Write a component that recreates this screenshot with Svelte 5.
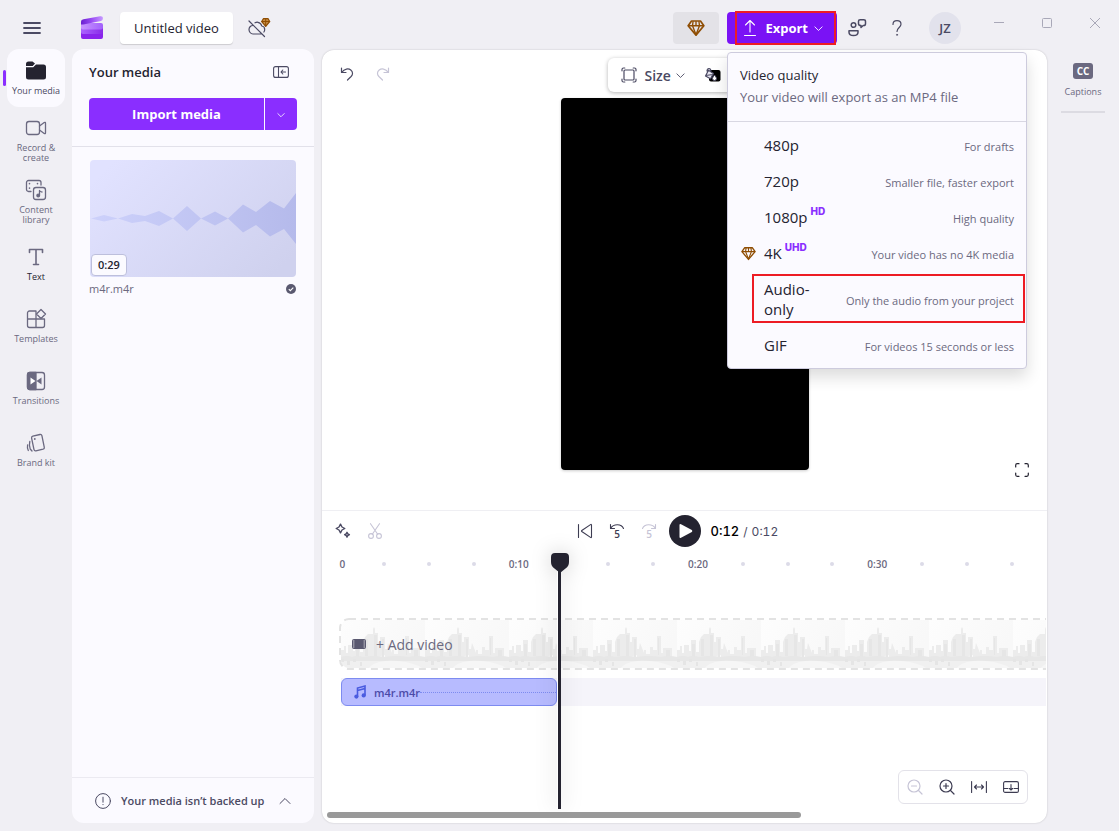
<script>
  let title = $state('Untitled video');

  const railItems = [
    { id: 'media', label: 'Your media', active: true },
    { id: 'record', label: 'Record & create' },
    { id: 'library', label: 'Content library' },
    { id: 'text', label: 'Text', dark: true },
    { id: 'templates', label: 'Templates' },
    { id: 'transitions', label: 'Transitions' },
    { id: 'brand', label: 'Brand kit' }
  ];

  const qualities = [
    { name: '480p', note: 'For drafts' },
    { name: '720p', note: 'Smaller file, faster export' },
    { name: '1080p', badge: 'HD', note: 'High quality' },
    { name: '4K', badge: 'UHD', premium: true, note: 'Your video has no 4K media' },
    { name: 'Audio-only', note: 'Only the audio from your project', marked: true },
    { name: 'GIF', note: 'For videos 15 seconds or less' }
  ];

  // one tick every 2.5 seconds, a label every 10
  const ticks = Array.from({ length: 16 }, (_, i) => {
    const s = i * 2.5;
    if (i % 4) return '';
    return s === 0 ? '0' : `${Math.floor(s / 60)}:${String(s % 60).padStart(2, '0')}`;
  });
</script>

{#snippet gem(size)}
  <svg width={size} height={size} viewBox="0 0 16 16" fill="none" stroke="#8f4e04" stroke-width="1.5" stroke-linejoin="round" aria-hidden="true">
    <path d="M4 1.8h8L15 6l-7 8.3L1 6z" />
    <path d="M1 6h14M5.4 2L4.9 6 8 14l3.1-8-.5-4M8 2v4" stroke-width="1.2" />
  </svg>
{/snippet}

{#snippet chevron(size)}
  <svg width={size} height={size} viewBox="0 0 10 10" fill="none" stroke="currentColor" stroke-linecap="round" stroke-linejoin="round" aria-hidden="true">
    <path d="M1 3.2l4 4 4-4" />
  </svg>
{/snippet}

<div class="app">
  <header class="topbar">
    <button class="icon-btn menu-btn" aria-label="Menu">
      <svg width="18" height="14" viewBox="0 0 18 14" stroke="#4b4a63" stroke-width="1.8" stroke-linecap="round"><path d="M1 2h16M1 7h16M1 12h16" /></svg>
    </button>
    <svg class="logo" width="24" height="24" viewBox="0 0 24 24" aria-hidden="true">
      <defs>
        <linearGradient id="lg-top" x1="0" x2="1"><stop offset="0" stop-color="#6a1fd0" /><stop offset=".5" stop-color="#9b4df5" /><stop offset="1" stop-color="#c79bff" /></linearGradient>
        <linearGradient id="lg-mid" x1="0" x2="1"><stop offset="0" stop-color="#c995ff" /><stop offset="1" stop-color="#a261fb" /></linearGradient>
        <linearGradient id="lg-low" x1="0" x2="1"><stop offset="0" stop-color="#ab62ff" /><stop offset="1" stop-color="#8a2be8" /></linearGradient>
      </defs>
      <path d="M1 15h22v6a2 2 0 0 1-2 2H3a2 2 0 0 1-2-2z" fill="#8a24ec" />
      <path d="M1 12h22v4a2 2 0 0 1-2 2H3a2 2 0 0 1-2-2z" fill="url(#lg-low)" />
      <path d="M1 7h20a2 2 0 0 1 2 2v2.500a2 2 0 0 1-2 2H3a2 2 0 0 1-2-2z" fill="url(#lg-mid)" />
      <path d="M1 8.500V5.500q0-1.800 2.500-2.300L20 .3q3-.4 3 1.700 0 2.500-2 3L6 8Q2 8.700 1 8.500z" fill="url(#lg-top)" />
    </svg>
    <input class="title" aria-label="Video title" bind:value={title} />
    <button class="icon-btn cloud-btn" aria-label="Backup is off">
      <svg width="24" height="22" viewBox="0 0 24 22" fill="none" stroke="#4b4a63" stroke-width="1.2" stroke-linecap="round" stroke-linejoin="round">
        <path d="M6 8.500C3.500 8.500 2 10.500 2 12.500S3.500 17 6 17h9M8 5.800c1-.5 2-.7 3-.5 2 .4 3.300 1.700 3.700 3.700 2 .2 3 1.500 3 3.500 0 1-.3 1.800-.8 2.500M2 4l15.500 15.500" />
        <path d="M16.500 1.600h4.500l1.700 2.900-4 4.800-4-4.800z" fill="#c98f45" stroke="#8f4e04" />
        <path d="M14.700 4.500h8M18.700 2v7" stroke="#8f4e04" stroke-width="1" />
      </svg>
    </button>

    <div class="actions">
      <button class="gem-btn" aria-label="Upgrade">{@render gem(18)}</button>
      <div class="export">
        <button class="export-btn" aria-expanded="true">
          <svg width="14" height="18" viewBox="0 0 14 18" fill="none" stroke="#fff" stroke-width="1.1" stroke-linecap="round" stroke-linejoin="round"><path d="M7 13V1.500M2.500 6L7 1.500 11.500 6M1.500 16.500h11" /></svg>
          <span>Export</span>
          {@render chevron(9)}
        </button>
        <span class="export-mark"></span>

        <div class="export-menu" role="menu">
          <div class="menu-head">
            <div class="menu-title">Video quality</div>
            <div class="menu-sub">Your video will export as an MP4 file</div>
          </div>
          <div class="menu-list">
            {#each qualities as q}
              <button class="quality" class:marked={q.marked} role="menuitem">
                <span class="quality-icon">{#if q.premium}{@render gem(15)}{/if}</span>
                <span class="quality-name">{q.name}{#if q.badge}<sup>{q.badge}</sup>{/if}</span>
                <span class="quality-note">{q.note}</span>
              </button>
            {/each}
          </div>
        </div>
      </div>
      <button class="icon-btn" aria-label="Feedback">
        <svg width="20" height="20" viewBox="0 0 20 20" fill="none" stroke="#4b4a63" stroke-width="1.5" stroke-linejoin="round">
          <circle cx="6.500" cy="7" r="2.300" />
          <path d="M2 12.700h9v1.500c0 2-1.800 3.300-4.500 3.300S2 16.200 2 14.200zM11.500 3.300c0-1 .8-1.600 1.600-1.600h3.600c1 0 1.800.8 1.800 1.700v2.300c0 1-.8 1.800-1.800 1.800h-.5L14 9.500v-2c-1.500 0-2.500-.8-2.500-1.800z" />
        </svg>
      </button>
      <button class="icon-btn" aria-label="Help">
        <svg width="12" height="18" viewBox="0 0 12 18" fill="none" stroke="#4b4a63" stroke-width="1.200" stroke-linecap="round"><path d="M2 5.500C2 3 3.700 1.700 6 1.700S10 3 10 5.300C10 8.500 6 8.500 6 12.500" /><circle cx="6" cy="15.800" r=".6" fill="#4b4a63" stroke-width=".6" /></svg>
      </button>
      <button class="avatar">JZ</button>
      <div class="window-btns">
        <button class="icon-btn" aria-label="Minimize"><svg width="10" height="10" viewBox="0 0 10 10" stroke="#a9a8b8"><path d="M0 4.500h10" /></svg></button>
        <button class="icon-btn" aria-label="Maximize"><svg width="10" height="10" viewBox="0 0 10 10" fill="none" stroke="#a9a8b8"><rect x=".5" y=".5" width="9" height="9" rx="1" /></svg></button>
        <button class="icon-btn" aria-label="Close"><svg width="10" height="10" viewBox="0 0 10 10" stroke="#a9a8b8"><path d="M0 0l10 10M10 0L0 10" /></svg></button>
      </div>
    </div>
  </header>

  <div class="workspace">
    <nav class="rail">
      {#each railItems as item}
        <button class="rail-item" class:active={item.active} class:dark={item.dark}>
          <svg width="24" height="24" viewBox="0 0 24 24" fill="none" stroke="#6b6980" stroke-width="1.300" stroke-linecap="round" stroke-linejoin="round" aria-hidden="true">
            {#if item.id === 'media'}
              <g fill="#242330" stroke="none">
                <path d="M2 5a2.500 2.500 0 0 1 2.500-2.500h4L11 4.600 8.700 7H2z" />
                <path d="M2 8.300h7.200L12 5.500h7.500A2.500 2.500 0 0 1 22 8v10a2.500 2.500 0 0 1-2.500 2.500h-15A2.500 2.500 0 0 1 2 18z" />
              </g>
            {:else if item.id === 'record'}
              <rect x="2.500" y="5.500" width="13" height="13" rx="2.500" />
              <path d="M15.500 10l4.700-3.500q1.300-.7 1.300.8v9.400q0 1.500-1.300.8L15.500 14" />
            {:else if item.id === 'library'}
              <path d="M7 13.500H4.500a2 2 0 0 1-2-2v-7a2 2 0 0 1 2-2H15a2 2 0 0 1 2 2V7" />
              <path d="M5.500 5.500v.2M5.500 10v.2M13.500 5.500v.2" stroke-width="1.600" />
              <rect x="9.500" y="9.500" width="12" height="12" rx="2.500" />
              <path d="M15.500 17.500v-5q1 1.500 2.500 1.500" />
              <circle cx="14.200" cy="17.500" r="1.300" fill="#6b6980" />
            {:else if item.id === 'text'}
              <path d="M5.500 7.500V4.500h13v3M12 4.500v15M9.500 19.500h5" stroke-width="1.600" />
            {:else if item.id === 'templates'}
              <path d="M12 12V4H5.500A2 2 0 0 0 3.500 6v12.500a2 2 0 0 0 2 2h13a2 2 0 0 0 2-2V12h-17M12 12v8.500" />
              <path d="M17 2.500l4.500 4.500-4.500 4.500L12.500 7z" fill="#f0eff4" />
            {:else if item.id === 'transitions'}
              <rect x="3.500" y="3.500" width="17" height="17" rx="2.500" />
              <path d="M3.500 6a2.500 2.500 0 0 1 2.500-2.500h6v17H6A2.500 2.500 0 0 1 3.500 18z" fill="#6b6980" />
              <path d="M6.500 8.500v7L11.500 12z" fill="#fff" stroke="none" />
              <path d="M17.500 8.500v7L12.500 12z" fill="#6b6980" stroke="none" />
            {:else}
              <path d="M8.800 5.200l7.200-1.700q1.500-.3 1.900 1.200l2.400 11.600q.3 1.500-1.200 1.900l-7.200 1.600q-1.500.3-1.900-1.200L7.600 7.100q-.3-1.500 1.200-1.900z" />
              <path d="M5.800 10.500q-1 4 .4 7.500l1.800 2M3.600 14q-.6 3 .7 5.500" />
              <path d="M10.800 8v.1" stroke-width="1.800" />
            {/if}
          </svg>
          <span>{item.label}</span>
        </button>
      {/each}
    </nav>

    <aside class="media">
      <div class="media-head">
        <h2>Your media</h2>
        <button class="collapse" aria-label="Collapse panel">
          <svg width="16" height="12" viewBox="0 0 16 12" fill="none" stroke="#4b4a63" stroke-width="1.100" stroke-linecap="round" stroke-linejoin="round"><rect x=".6" y=".6" width="14.800" height="10.800" rx="2" /><path d="M5.500.6v10.800M12.500 6H8M9.800 4L8 6l1.800 2" /></svg>
        </button>
      </div>
      <div class="import">
        <button class="import-main">Import media</button>
        <button class="import-more" aria-label="More import options">{@render chevron(8)}</button>
      </div>
      <div class="media-grid">
        <div class="thumb">
          <svg viewBox="0 0 206 117" preserveAspectRatio="none" aria-hidden="true">
            <defs>
              <linearGradient id="thumb-bg" x1="0" y1=".2" x2="1" y2=".8"><stop offset="0" stop-color="#e1e2ff" /><stop offset="1" stop-color="#cfd1ee" /></linearGradient>
              <linearGradient id="thumb-wave" x1="0" x2="1"><stop offset="0" stop-color="#cdd1fb" /><stop offset="1" stop-color="#b5baeb" /></linearGradient>
            </defs>
            <rect width="206" height="117" fill="url(#thumb-bg)" />
            <polygon fill="url(#thumb-wave)" points="1,58.500 14,55 28,58.500 42,54 55,56 69,51 83,58.500 97,46 111,58.500 125,51.500 138,58.500 153,44.500 166,52 180,41 194,48.500 206,33 206,84 194,69 180,76.500 166,65 153,72.500 138,58.500 125,65.500 111,58.500 97,71 83,58.500 69,66 55,61 42,63 28,58.500 14,61.500" />
          </svg>
          <span class="duration">0:29</span>
        </div>
        <div class="file">
          <span>m4r.m4r</span>
          <svg width="10" height="10" viewBox="0 0 10 10" aria-label="In use"><circle cx="5" cy="5" r="5" fill="#5a5970" /><path d="M2.800 5.200l1.500 1.500 3-3" fill="none" stroke="#fff" stroke-width="1.100" /></svg>
        </div>
      </div>
      <button class="backup">
        <svg width="16" height="16" viewBox="0 0 16 16" fill="none" stroke="#4b4a63" stroke-linecap="round"><circle cx="8" cy="8" r="7.400" /><path d="M8 4.200v5M8 11.500v.2" /></svg>
        <span>Your media isn’t backed up</span>
        <svg width="12" height="8" viewBox="0 0 12 8" fill="none" stroke="#4b4a63" stroke-linecap="round" stroke-linejoin="round"><path d="M1 6.500l5-5 5 5" /></svg>
      </button>
    </aside>

    <main class="editor">
      <section class="preview">
        <div class="preview-bar">
          <button class="icon-btn" aria-label="Undo">
            <svg width="14" height="16" viewBox="0 0 14 16" fill="none" stroke="#4b4a63" stroke-width="1.200" stroke-linecap="round" stroke-linejoin="round"><path d="M1.500 2v4.500H6M1.700 6.300C4.500 2.500 8.500 2.200 10.800 4s2.200 4.500.3 6.500L7.500 14" /></svg>
          </button>
          <button class="icon-btn" aria-label="Redo" disabled>
            <svg width="14" height="16" viewBox="0 0 14 16" fill="none" stroke="#c6c4d6" stroke-width="1.200" stroke-linecap="round" stroke-linejoin="round"><path d="M12.500 2v4.500H8M12.300 6.300C9.500 2.500 5.500 2.200 3.200 4s-2.200 4.500-.3 6.500L6.500 14" /></svg>
          </button>
        </div>
        <div class="size-bar">
          <button class="size-btn">
            <svg width="16" height="16" viewBox="0 0 16 16" fill="none" stroke="#4b4a63" stroke-width="1.200" stroke-linecap="round" stroke-linejoin="round"><rect x="3" y="3" width="10" height="10" rx="1" /><path d="M1 3.800V2.500Q1 1 2.500 1h1.300M12.200 1h1.300Q15 1 15 2.500v1.300M15 12.200v1.300q0 1.500-1.500 1.500h-1.300M3.800 15H2.500Q1 15 1 13.500v-1.300" /></svg>
            <span>Size</span>
            {@render chevron(9)}
          </button>
          <button class="icon-btn" aria-label="Background colour">
            <svg width="18" height="16" viewBox="0 0 18 16"><rect x="6" y="3" width="11.500" height="11.500" rx="2" /><path d="M5.500 3.200l5 3.300-3 5.300L2.500 9zM4 4.500q0-3 2-3t2 3.500M2.700 8.500l7-1" fill="#e9e8f3" stroke="#4b4a63" stroke-width="1.200" stroke-linejoin="round" /><path d="M11.500 8q2 2.300 2 3.500a2 2 0 0 1-4 0q0-1.200 2-3.500z" fill="#fff" stroke="#4b4a63" /></svg>
          </button>
        </div>
        <div class="stage"></div>
        <button class="icon-btn fullscreen" aria-label="Full screen">
          <svg width="14" height="14" viewBox="0 0 14 14" fill="none" stroke="#242330" stroke-width="1.200" stroke-linecap="round"><path d="M.7 4V2.200Q.7.700 2.200.700H4M10 .7h1.800q1.500 0 1.500 1.500V4M13.300 10v1.800q0 1.500-1.500 1.500H10M4 13.300H2.200q-1.500 0-1.500-1.500V10" /></svg>
        </button>
      </section>

      <section class="timeline">
        <div class="controls">
          <div class="controls-left">
            <button class="icon-btn" aria-label="Smart tools">
              <svg width="16" height="16" viewBox="0 0 16 16" fill="none" stroke="#4b4a63" stroke-width="1.400" stroke-linejoin="round"><path d="M5.500 1.200l1.500 2.800 2.800 1.500L7 7 5.500 9.800 4 7 1.200 5.500 4 4zM12 9.300l.8 1.600 1.600.8-1.600.8L12 14.100l-.8-1.600-1.600-.8 1.600-.8z" /></svg>
            </button>
            <button class="icon-btn" aria-label="Split" disabled>
              <svg width="14" height="16" viewBox="0 0 14 16" fill="none" stroke="#c6c4d6" stroke-width="1.100" stroke-linecap="round"><circle cx="3" cy="13" r="2.400" /><circle cx="11" cy="13" r="2.400" /><path d="M2.500.7l7.200 10.500M11.500.7L4.300 11.200" /></svg>
            </button>
            <div class="transport">
              <button class="icon-btn" aria-label="Skip to start">
                <svg width="16" height="16" viewBox="0 0 16 16" fill="none" stroke="#3d3c52" stroke-width="1.100" stroke-linecap="round" stroke-linejoin="round"><path d="M1.500 1.500v13M14.500 2v12q0 1-1 .4L4.800 8.500q-.6-.5 0-1L13.500 1.600q1-.6 1 .4z" /></svg>
              </button>
              <button class="icon-btn" aria-label="Back 5 seconds">
                <svg width="16" height="24" viewBox="0 -4 16 24" fill="none" stroke="#3d3c52" stroke-width="1.100" stroke-linecap="round" stroke-linejoin="round"><path d="M1.500 1.500V5.500H5.500M1.800 5.200C4.500.5 12.500.5 14.500 5.500" /><text class="step" x="8" y="15">5</text></svg>
              </button>
              <button class="icon-btn faded" aria-label="Forward 5 seconds" disabled>
                <svg width="16" height="24" viewBox="0 -4 16 24" fill="none" stroke="#c6c4d6" stroke-width="1.100" stroke-linecap="round" stroke-linejoin="round"><path d="M14.500 1.500V5.500H10.500M14.200 5.200C11.500.5 3.500.5 1.500 5.500" /><text class="step" x="8" y="15">5</text></svg>
              </button>
            </div>
          </div>
          <button class="play" aria-label="Play">
            <svg width="14" height="16" viewBox="0 0 14 16" fill="#fff"><path d="M.5 2Q.5.500 2 1.200l10.800 5.700q1.200 1.100 0 2.200L2 14.800Q.5 15.500.5 14z" /></svg>
          </button>
          <div class="time"><span class="now">0:12</span><span>/</span><span>0:12</span></div>
        </div>

        <div class="ruler">
          {#each ticks as label}
            <div class="tick">
              {#if label}{label}{:else}<i></i>{/if}
            </div>
          {/each}
        </div>

        <div class="tracks">
          <button class="video-track">
            <svg class="skyline" aria-hidden="true">
              <defs>
                <linearGradient id="sky" x1="0" y1="0" x2="1" y2=".3"><stop offset="0" stop-color="#fdfdfd" /><stop offset="1" stop-color="#f8f8f8" /></linearGradient>
                <pattern id="city" x="2" width="84" height="52" patternUnits="userSpaceOnUse">
                  <rect width="84" height="52" fill="url(#sky)" />
                  <g fill="#ececec">
                    <path d="M0 42V32h3v-4h2v7h2v-8h5v6h2V22h5v12h3v8z" />
                    <path d="M22 42V24l2-5 3-3h5v-5l1-2 1 2v4h3v9h2v-5h5v18z" />
                    <path d="M44 42V31h2l1-6 4 10v-3h2v4h4v-7h3v3h4V18h4v17h2v-5h9v9h5v3z" />
                  </g>
                  <path fill="#e6e6e6" d="M15 26h3v14h-3zM24 21h3v17h-3zM33 17h3v21h-3zM41 21h2v18h-2zM65 20h1v17h-1zM73 32h4v7h-4z" />
                  <path fill="#e7e7e7" d="M0 39q6-2 11 0 5-2 11 0 12-2 22 0 11-2 24 0 8-2 16 0v4H0z" />
                  <path fill="#f0f0f0" d="M0 43h84v9H0z" />
                  <path fill="#f6f6f6" d="M26 52q5-8 18-9 20-1 34 5l6 4z" />
                  <path fill="#e5e5e5" d="M0 41h3v3H0zM6 43h3v4H6zM12 41h3v3h-3zM19 44h2v4h-2z" />
                </pattern>
              </defs>
              <rect x="1" y="1" width="120%" height="50" rx="9" fill="url(#city)" stroke="#fff" stroke-width="2" />
              <rect x="1" y="1" width="120%" height="50" rx="9" fill="none" stroke="#e3e3e3" stroke-width="2" stroke-dasharray="7 5" />
            </svg>
            <svg width="14" height="10" viewBox="0 0 14 10" aria-hidden="true"><rect width="14" height="10" rx="2" fill="#5a5970" /><path d="M1.800 1.500v8M12.200 1.500v8" stroke="#fff" stroke-dasharray="1 1" /></svg>
            <span>+ Add video</span>
          </button>
          <div class="audio-track">
            <button class="clip">
              <svg width="12" height="14" viewBox="0 0 12 14" aria-hidden="true"><path d="M3.500 11.500V3L11 1v9.500M3.500 5.500L11 3.500" fill="none" stroke="#4a5ce0" stroke-width="1.600" /><circle cx="2.400" cy="11.600" r="2.100" fill="#4a5ce0" /><circle cx="9.700" cy="10.400" r="2.100" fill="#4a5ce0" /></svg>
              <span>m4r.m4r</span>
              <i></i>
            </button>
          </div>
        </div>

        <div class="playhead">
          <svg width="18" height="20" viewBox="0 0 18 20" aria-hidden="true"><path d="M4 0h10q4 0 4 4v5q0 4-3.500 6.500L9 20l-5.500-4.500Q0 13 0 9V4q0-4 4-4z" fill="#242330" /></svg>
        </div>
        <div class="scrollbar"></div>

        <div class="zoom-bar">
          <button class="icon-btn" aria-label="Zoom out" disabled><svg width="16" height="16" viewBox="0 0 16 16" fill="none" stroke="#c6c4d6" stroke-width="1.200" stroke-linecap="round"><circle cx="7" cy="7" r="6" /><path d="M4.500 7h5M11.500 11.500L15 15" /></svg></button>
          <button class="icon-btn" aria-label="Zoom in"><svg width="16" height="16" viewBox="0 0 16 16" fill="none" stroke="#3d3c52" stroke-width="1.200" stroke-linecap="round"><circle cx="7" cy="7" r="6" /><path d="M4.500 7h5M7 4.500v5M11.500 11.500L15 15" /></svg></button>
          <button class="icon-btn" aria-label="Fit to width"><svg width="16" height="14" viewBox="0 0 16 14" fill="none" stroke="#3d3c52" stroke-width="1.100" stroke-linecap="round" stroke-linejoin="round"><path d="M.6 1.500v11M15.400 1.500v11M3.500 7h9M5.500 5l-2 2 2 2M10.500 5l2 2-2 2" /></svg></button>
          <button class="icon-btn" aria-label="Collapse timeline"><svg width="16" height="12" viewBox="0 0 16 12" fill="none" stroke="#3d3c52" stroke-width="1.100" stroke-linecap="round" stroke-linejoin="round"><rect x=".6" y=".6" width="14.800" height="10.800" rx="1.500" /><path d="M.6 7.500h4.400M11 7.500h4.400M8 3.500V9M6.500 7.500L8 9l1.500-1.500" /></svg></button>
        </div>
      </section>
    </main>

    <aside class="side">
      <button class="captions">
        <span class="cc">CC</span>
        <span>Captions</span>
      </button>
    </aside>
  </div>
</div>

<style>
  :global(body) {
    margin: 0;
    background: #f0eff4;
  }

  .app {
    --ink: #242330;
    --text: #4b4a63;
    --muted: #6b6980;
    --purple: #8a2eff;
    display: flex;
    flex-direction: column;
    height: 100vh;
    min-height: 640px;
    box-sizing: border-box;
    padding-bottom: 8px;
    font-family: 'Open Sans', 'Noto Sans', sans-serif;
    font-size: 13px;
    color: var(--ink);
    overflow: hidden;
  }

  .app * {
    box-sizing: border-box;
  }

  button {
    font: inherit;
    color: inherit;
    border: none;
    padding: 0;
    margin: 0;
    background: none;
    cursor: pointer;
  }

  .icon-btn {
    display: inline-flex;
    align-items: center;
    justify-content: center;
    flex: none;
    width: 32px;
    height: 32px;
  }

  /* top bar */
  .topbar {
    display: flex;
    align-items: center;
    height: 49px;
    padding: 7px 0 0 16px;
    flex: none;
  }

  .logo {
    margin: 0 16px 0 32px;
  }

  .title {
    width: 113px;
    height: 32px;
    padding: 0;
    border: none;
    border-radius: 4px;
    background: #fff;
    box-shadow: 0 1px 1px rgba(0, 0, 0, 0.15);
    text-align: center;
    font: inherit;
    color: var(--ink);
  }

  .cloud-btn {
    margin-left: 10px;
  }

  .actions {
    display: flex;
    align-items: center;
    margin-left: auto;
  }

  .gem-btn {
    display: flex;
    align-items: center;
    justify-content: center;
    width: 46px;
    height: 32px;
    margin-right: 8px;
    border-radius: 4px;
    background: #e3e2e7;
  }

  .export {
    position: relative;
    margin-right: 2px;
  }

  .export-btn {
    display: flex;
    align-items: center;
    justify-content: flex-end;
    gap: 6px;
    width: 110px;
    height: 32px;
    padding-right: 14px;
    border-radius: 4px;
    background: #7a12f5;
    color: #fff;
    font-weight: 700;
  }

  .export-btn span {
    margin-left: 2px;
  }

  .export-mark {
    position: absolute;
    inset: -1px 1px -1px 8px;
    border: 2px solid #ed1c24;
    pointer-events: none;
  }

  .export-menu {
    position: absolute;
    top: 40px;
    left: 0;
    z-index: 10;
    width: 300px;
    border: 1px solid #cdcbdd;
    border-radius: 4px;
    background: #fbfaff;
    box-shadow: 0 8px 16px rgba(0, 0, 0, 0.14);
  }

  .menu-head {
    padding: 11px 12px 13px;
    line-height: 22px;
    border-bottom: 1px solid #d8d7e2;
  }

  .menu-sub {
    color: var(--muted);
  }

  .menu-list {
    padding: 5px 0;
  }

  .quality {
    position: relative;
    display: flex;
    align-items: center;
    width: 100%;
    padding: 8px 12px;
    text-align: left;
    line-height: 20px;
  }

  .quality-icon {
    display: flex;
    justify-content: center;
    width: 16px;
    margin-right: 8px;
  }

  .quality-name {
    flex: 1;
    font-size: 15px;
  }

  .quality-name sup {
    margin-left: 3px;
    font-family: Inter, sans-serif;
    font-size: 10px;
    font-weight: 800;
    line-height: 0;
    vertical-align: 8px;
    color: var(--purple);
  }

  .quality-note {
    padding-top: 4px;
    font-size: 11px;
    line-height: 16px;
    white-space: nowrap;
    color: var(--muted);
  }

  .marked .quality-note {
    padding-left: 12px;
  }

  .marked::after {
    content: '';
    position: absolute;
    inset: 3px 1px 4px 24px;
    border: 2px solid #ed1c24;
  }

  .avatar {
    width: 32px;
    height: 32px;
    margin: 0 14px;
    border-radius: 50%;
    background: #e2e2ec;
    color: var(--text);
    font-weight: 600;
  }

  .actions > .icon-btn {
    width: 36px;
    margin-right: 4px;
  }

  .actions > .icon-btn + .icon-btn {
    margin-right: 0;
  }

  .window-btns {
    display: flex;
    align-self: flex-start;
  }

  .window-btns .icon-btn {
    width: 48px;
    height: 22px;
  }

  .workspace {
    display: flex;
    flex: 1;
    min-height: 0;
  }

  /* left rail */
  .rail {
    display: flex;
    flex-direction: column;
    align-items: center;
    gap: 4px;
    flex: none;
    width: 72px;
  }

  .rail-item {
    position: relative;
    display: flex;
    flex-direction: column;
    align-items: center;
    justify-content: center;
    gap: 3px;
    width: 58px;
    height: 58px;
    padding-bottom: 1px;
    border-radius: 12px;
    font-size: 9px;
    line-height: 10px;
    color: var(--muted);
  }

  .rail-item.active {
    background: #fbfaff;
    color: var(--text);
  }

  .rail-item.dark {
    color: var(--ink);
  }

  .rail-item.active::before {
    content: '';
    position: absolute;
    left: -4px;
    top: 21px;
    width: 3px;
    height: 16px;
    border-radius: 2px;
    background: var(--purple);
  }

  .rail-item span {
    max-width: 52px;
  }

  /* media panel */
  .media {
    display: flex;
    flex-direction: column;
    flex: none;
    width: 242px;
    margin-right: 8px;
    border-radius: 12px;
    background: #fbfaff;
  }

  .media-head {
    display: flex;
    align-items: center;
    justify-content: space-between;
    padding: 7px 17px 10px;
  }

  .collapse {
    display: flex;
    align-items: center;
    justify-content: center;
    width: 32px;
    height: 32px;
  }

  h2 {
    margin: 0;
    font-size: 13px;
    font-weight: 600;
  }

  .import {
    display: flex;
    gap: 1px;
    padding: 0 17px 16px;
    border-bottom: 1px solid #e2e1ea;
  }

  .import-main,
  .import-more {
    height: 32px;
    background: var(--purple);
    color: #fff;
  }

  .import-main {
    flex: 1;
    border-radius: 4px 0 0 4px;
    font-weight: 700;
  }

  .import-more {
    width: 32px;
    border-radius: 0 4px 4px 0;
  }

  .media-grid {
    flex: 1;
    padding: 13px 17px;
  }

  .thumb {
    position: relative;
    height: 117px;
    margin: 0 1px;
    border-radius: 4px;
    overflow: hidden;
  }

  .thumb svg {
    display: block;
    width: 100%;
    height: 100%;
  }

  .duration {
    position: absolute;
    left: 1px;
    bottom: 1px;
    padding: 0 6px;
    border: 1px solid #bdbfdc;
    border-radius: 4px;
    background: #fbfaff;
    font-size: 11px;
    font-weight: 600;
    line-height: 20px;
  }

  .file {
    display: flex;
    align-items: center;
    justify-content: space-between;
    padding: 4px 1px 0 0;
    font-size: 11px;
    line-height: 16px;
    color: var(--muted);
  }

  .backup {
    display: flex;
    align-items: center;
    height: 46px;
    padding: 0 23px;
    border-top: 1px solid #ebeaf1;
    font-size: 11px;
    font-weight: 600;
    color: var(--text);
  }

  .backup span {
    margin: 0 auto 0 10px;
  }

  /* editor */
  .editor {
    display: flex;
    flex-direction: column;
    flex: 1;
    min-width: 0;
    margin-top: 1px;
    border-radius: 12px;
    background: #fff;
    box-shadow: 0 0 2px rgba(0, 0, 0, 0.2);
  }

  .preview {
    position: relative;
    display: flex;
    flex-direction: column;
    flex: 1;
    min-height: 0;
    padding-bottom: 40px;
  }

  .preview-bar {
    display: flex;
    align-items: center;
    gap: 4px;
    flex: none;
    height: 48px;
    padding-left: 9px;
  }

  .size-bar {
    position: absolute;
    top: 8px;
    left: 50%;
    display: flex;
    align-items: center;
    width: 154px;
    height: 34px;
    margin-left: -77px;
    padding-left: 13px;
    border-radius: 6px;
    background: #fff;
    box-shadow: 0 1px 4px rgba(0, 0, 0, 0.3);
  }

  .size-btn {
    display: flex;
    align-items: center;
    font-size: 14px;
    font-weight: 600;
    color: var(--text);
  }

  .size-btn span {
    margin: 0 5px 0 8px;
  }

  .size-bar .icon-btn {
    margin-left: 11px;
  }

  .stage {
    flex: 1;
    min-height: 0;
    align-self: center;
    aspect-ratio: 2 / 3;
    border-radius: 4px;
    background: #000;
    box-shadow: 0 1px 3px rgba(0, 0, 0, 0.2);
  }

  .fullscreen {
    position: absolute;
    right: 9px;
    bottom: 24px;
  }

  .timeline {
    position: relative;
    flex: none;
    height: 313px;
    border-top: 1px solid #efeff3;
    overflow: hidden;
  }

  .controls {
    display: grid;
    grid-template-columns: 1fr 32px 1fr;
    align-items: center;
    height: 40px;
  }

  .controls-left {
    display: flex;
    padding: 0 4px 0 5px;
  }

  .transport {
    display: flex;
    margin-left: auto;
    color: #3d3c52;
  }

  .faded {
    color: #c6c4d6;
  }

  .step {
    font-size: 10px;
    font-weight: 600;
    text-anchor: middle;
    fill: currentColor;
    stroke: none;
  }

  .play {
    display: flex;
    align-items: center;
    justify-content: center;
    width: 32px;
    height: 32px;
    padding-left: 3px;
    border-radius: 50%;
    background: var(--ink);
  }

  .time {
    display: flex;
    align-items: center;
    gap: 4px;
    padding-left: 10px;
    font-family: Inter, sans-serif;
    font-size: 12px;
    font-variant-numeric: tabular-nums;
    color: var(--text);
  }

  .now {
    font-size: 13px;
    font-weight: 500;
    color: #000;
  }

  .ruler {
    display: flex;
    height: 25px;
    margin: 0 13px 0 -5px;
    font-size: 10px;
    font-weight: 600;
    color: var(--muted);
  }

  .tick {
    display: flex;
    flex: 1 0 0;
    align-items: center;
    justify-content: center;
  }

  .tick:first-child {
    text-indent: 6px;
  }

  .tick i {
    width: 4px;
    height: 4px;
    border-radius: 50%;
    background: #dcdbe8;
  }

  .tracks {
    padding: 42px 1px 0 17px;
  }

  .video-track {
    position: relative;
    display: flex;
    align-items: center;
    gap: 10px;
    width: 100%;
    height: 52px;
    padding-left: 13px;
    font-size: 14px;
    color: var(--muted);
  }

  .video-track > * {
    position: relative;
  }

  .video-track .skyline {
    position: absolute;
    inset: 0;
    width: 100%;
    height: 100%;
  }

  .audio-track {
    height: 28px;
    margin: 8px 0 0 2px;
    background: #f5f4fa;
  }

  .clip {
    display: flex;
    align-items: center;
    width: 216px;
    height: 28px;
    padding-left: 12px;
    border: 1px solid #7d8bf0;
    border-radius: 6px;
    background: #b7bbff;
    font-size: 11px;
    font-weight: 600;
    color: #4b4aa8;
  }

  .clip span {
    margin-left: 8px;
  }

  .clip i {
    flex: 1;
    border-top: 1px dotted #7d8bf0;
  }

  .playhead {
    position: absolute;
    top: 42px;
    bottom: 14px;
    left: 229px;
    width: 18px;
    background: linear-gradient(90deg, transparent 6px, #fff 6px, #fff 7px, var(--ink) 7px, var(--ink) 10px, transparent 10px);
    filter: drop-shadow(0 0 10px rgba(0, 0, 0, 0.2));
  }

  .playhead svg {
    display: block;
  }

  .scrollbar {
    position: absolute;
    left: 5px;
    bottom: 5px;
    width: 474px;
    height: 6px;
    border-radius: 3px;
    background: #999;
  }

  .zoom-bar {
    position: absolute;
    right: 19px;
    bottom: 19px;
    display: flex;
    border: 1px solid #e3e2e9;
    border-radius: 6px;
    background: #fff;
  }

  /* right rail */
  .side {
    display: flex;
    flex-direction: column;
    align-items: center;
    flex: none;
    width: 72px;
  }

  .captions {
    display: flex;
    flex-direction: column;
    align-items: center;
    gap: 8px;
    width: 44px;
    padding: 14px 0;
    border-bottom: 2px solid #dcdbe2;
    font-size: 9px;
    line-height: 10px;
    color: var(--muted);
  }

  .cc {
    width: 20px;
    border-radius: 3px;
    background: var(--muted);
    color: #fff;
    font-size: 10px;
    font-weight: 700;
    line-height: 16px;
  }
</style>
